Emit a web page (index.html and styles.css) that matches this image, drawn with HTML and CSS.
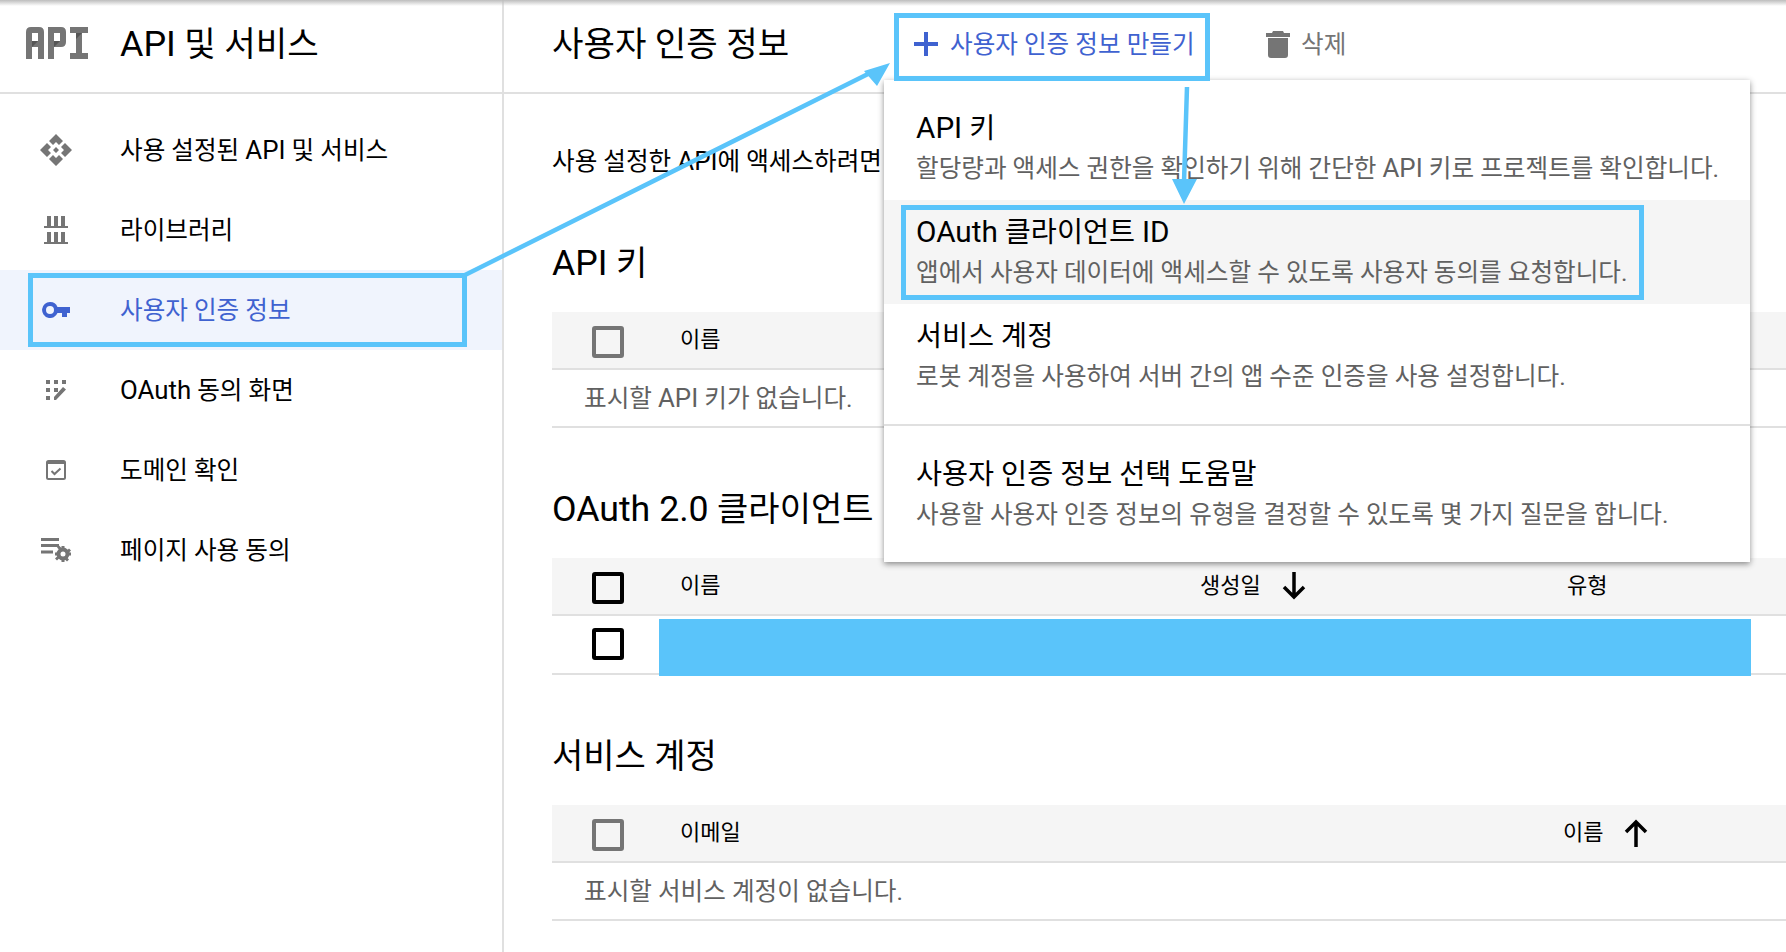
FILE: index.html
```html
<!DOCTYPE html>
<html lang="ko">
<head>
  <meta charset="UTF-8">
  <title>사용자 인증 정보 - API 및 서비스</title>
  <link rel="stylesheet" href="styles.css">
</head>
<body>

  <div class="top-shadow"></div>

  <div class="page">
    <!-- Sidebar -->
    <aside class="sidebar">
      <div class="side-head">
        <svg class="api-logo" viewBox="0 0 62 32" width="62" height="32">
          <path fill="#757575" d="M0 5Q0 0 5 0H13Q18 0 18 5V32H12V20H6V32H0ZM6 6V14H12V6ZM22 0H35Q40 0 40 5V15Q40 20 35 20H28V32H22ZM28 6V14H34V6ZM44 0H62V6H56V26H62V32H44V26H50V6H44Z"/>
          <path fill="#555" d="M6 14h6l-6 6zM28 14h6l-6 6zM50 6h6l-6 6z"/>
        </svg>
        <div class="side-title"><span class="en">API</span> 및 서비스</div>
      </div>
      <ul class="side-nav">
        <li>
          <span class="nav-icon">
            <svg viewBox="0 0 32 32" width="32" height="32"><path fill="#757575" d="M16 0l7 7-4 4-3-3-3 3-4-4zM16 32l7-7-4-4-3 3-3-3-4 4zM0 16l7-7 4 4-3 3 3 3-4 4zM32 16l-7-7-4 4 3 3-3 3 4 4zM16 13l3 3-3 3-3-3z"/></svg>
          </span>
          <span class="nav-label">사용 설정된 <span class="en">API</span> 및 서비스</span>
        </li>
        <li>
          <span class="nav-icon">
            <svg viewBox="0 0 24 28" width="24" height="28"><path fill="#757575" d="M3 0h4v10H3zM10 0h4v10h-4zM17 0h4v10h-4zM0 10h24v2H0zM3 16h4v10H3zM10 16h4v10h-4zM17 16h4v10h-4zM0 26h24v2H0z"/></svg>
          </span>
          <span class="nav-label">라이브러리</span>
        </li>
        <li class="active">
          <span class="nav-icon">
            <svg viewBox="0 0 28 16" width="28" height="16"><path fill="#3f62d0" d="M8 0a8 8 0 0 1 7.500 5H28v6h-3v4h-5v-4h-4.500A8 8 0 1 1 8 0zm0 4a4 4 0 1 0 0 8 4 4 0 0 0 0-8z"/></svg>
          </span>
          <span class="nav-label">사용자 인증 정보</span>
        </li>
        <li>
          <span class="nav-icon">
            <svg viewBox="0 0 20 20" width="20" height="20"><path fill="#757575" d="M0 0h4v4H0zM8 0h4v4H8zM16 0h4v4h-4zM0 8h4v4H0zM8 8h4v4H8zM0 16h4v4H0zM17 7l3 2.500L10 20H8v-3z"/></svg>
          </span>
          <span class="nav-label"><span class="en">OAuth</span> 동의 화면</span>
        </li>
        <li>
          <span class="nav-icon">
            <svg viewBox="0 0 20 20" width="20" height="20"><rect x="1" y="1" width="18" height="18" rx="1.500" fill="none" stroke="#757575" stroke-width="2"/><path fill="#757575" d="M1 1h18v3H1z"/><path fill="none" stroke="#757575" stroke-width="2" d="M5.500 11l3 3 6-5.500"/></svg>
          </span>
          <span class="nav-label">도메인 확인</span>
        </li>
        <li>
          <span class="nav-icon">
            <svg viewBox="0 0 30 24" width="30" height="24"><path fill="#757575" d="M0 0h18v3H0zM0 6h18v3H0zM0 12.500h12v3H0z"/><circle cx="22" cy="16" r="4.500" fill="none" stroke="#757575" stroke-width="4"/><path fill="#757575" d="M20.500 8h3v3h-3zM20.500 21h3v3h-3zM14 14.500h3v3h-3zM27 14.500h3v3h-3zM16 9.500l2-2 2.500 2.500-2 2zM26 19.500l2 2-2 2-2.500-2.500zM16 22.500l-2-2 2.500-2.500 2 2zM26 12.500l2-2 2 2-2.500 2.500z"/></svg>
          </span>
          <span class="nav-label">페이지 사용 동의</span>
        </li>
      </ul>
    </aside>

    <!-- Main -->
    <main class="main">
      <div class="toolbar">
        <h1 class="page-title">사용자 인증 정보</h1>
        <div class="create-btn">
          <svg viewBox="0 0 24 24" width="24" height="24"><path fill="#3f62d0" d="M10 0h4v10h10v4H14v10h-4V14H0v-4h10z"/></svg>
          사용자 인증 정보 만들기
        </div>
        <div class="delete-btn">
          <svg viewBox="0 0 24 27" width="24" height="27"><path fill="#757575" d="M7 0h10l1 2h6v4H0V2h6zM2 7h20v17a3 3 0 0 1-3 3H5a3 3 0 0 1-3-3z"/></svg>
          삭제
        </div>
      </div>

      <div class="content">
        <p class="intro">사용 설정한 <span class="en">API</span>에 액세스하려면</p>

        <h2 class="section-title first"><span class="en">API</span> 키</h2>
        <div class="table">
          <div class="row head-row keys">
            <span class="check"></span>
            <span class="col">이름</span>
          </div>
          <div class="empty-row">표시할 <span class="en">API</span> 키가 없습니다.</div>
        </div>

        <h2 class="section-title"><span class="en">OAuth 2.0</span> 클라이언트</h2>
        <div class="table">
          <div class="row head-row oauth">
            <span class="check dark"></span>
            <span class="col">이름</span>
            <span class="sort"><span class="col">생성일</span>
              <svg viewBox="0 0 24 28" width="24" height="28"><path fill="none" stroke="#000" stroke-width="3.500" d="M12 0v25M2 15l10 10 10-10"/></svg>
            </span>
            <span class="col">유형</span>
          </div>
          <div class="row data-row oauth">
            <span class="check dark"></span>
          </div>
        </div>

        <h2 class="section-title">서비스 계정</h2>
        <div class="table">
          <div class="row head-row accounts">
            <span class="check"></span>
            <span class="col">이메일</span>
            <span class="sort"><span class="col">이름</span>
              <svg viewBox="0 0 24 28" width="24" height="28"><path fill="none" stroke="#000" stroke-width="3.500" d="M12 28V3M2 13L12 3l10 10"/></svg>
            </span>
          </div>
          <div class="empty-row">표시할 서비스 계정이 없습니다.</div>
        </div>
      </div>
    </main>
  </div>

  <!-- Dropdown menu -->
  <div class="menu">
    <div class="menu-item">
      <div class="menu-name"><span class="en">API</span> 키</div>
      <div class="menu-desc">할당량과 액세스 권한을 확인하기 위해 간단한 <span class="en">API</span> 키로 프로젝트를 확인합니다.</div>
    </div>
    <div class="menu-item selected">
      <div class="menu-name"><span class="en">OAuth</span> 클라이언트 <span class="en">ID</span></div>
      <div class="menu-desc">앱에서 사용자 데이터에 액세스할 수 있도록 사용자 동의를 요청합니다.</div>
    </div>
    <div class="menu-item">
      <div class="menu-name">서비스 계정</div>
      <div class="menu-desc">로봇 계정을 사용하여 서버 간의 앱 수준 인증을 사용 설정합니다.</div>
    </div>
    <div class="menu-item help">
      <div class="menu-name">사용자 인증 정보 선택 도움말</div>
      <div class="menu-desc">사용할 사용자 인증 정보의 유형을 결정할 수 있도록 몇 가지 질문을 합니다.</div>
    </div>
  </div>

  <!-- Annotations drawn on top of the screenshot -->
  <div class="mark mark-nav"></div>
  <div class="mark mark-create"></div>
  <div class="mark mark-oauth"></div>
  <div class="redact"></div>
  <svg class="arrows" viewBox="0 0 1786 952" width="1786" height="952">
    <path fill="none" stroke="#5ac4fa" stroke-width="4.500" d="M465 275 872 72M1187 87l-3 95"/>
    <path fill="#5ac4fa" d="M890 63 864 71 877 86zM1184 204 1172 179H1197z"/>
  </svg>

</body>
</html>
```

FILE: styles.css
```css
* {
  box-sizing: border-box;
}

body {
  margin: 0;
  height: 952px;
  overflow: hidden;
  background: #fff;
  color: #000;
  font-family: Roboto, "Noto Sans CJK KR", sans-serif;
}

/* Latin runs sit a little larger next to the Hangul */
.en {
  font-size: 1.05em;
  line-height: 0;
}

.top-shadow {
  position: absolute;
  top: 0;
  left: 0;
  width: 100%;
  height: 6px;
  background: linear-gradient(#bdbdbd, rgba(255, 255, 255, 0));
}

.page {
  display: flex;
  height: 952px;
}

/* Sidebar */
.sidebar {
  width: 504px;
  flex-shrink: 0;
  border-right: 2px solid #e0e0e0;
}

.side-head {
  display: flex;
  align-items: center;
  height: 94px;
  padding: 0 0 10px 26px;
  border-bottom: 2px solid #e0e0e0;
}

.api-logo {
  margin-top: 4px;
  margin-right: 32px;
}

.side-title {
  font-size: 34.200px;
}

.side-nav {
  list-style-type: none;
  margin: 16px 0 0;
  padding: 0;
}

.side-nav li {
  display: flex;
  align-items: center;
  height: 80px;
  font-size: 24.600px;
}

.side-nav li.active {
  background-color: #f0f4fd;
  color: #3f62d0;
}

.nav-label {
  padding-bottom: 4px;
}

.nav-icon {
  display: flex;
  justify-content: center;
  align-items: center;
  width: 120px;
  padding-right: 8px;
  flex-shrink: 0;
}

/* Toolbar */
.main {
  flex: 1;
  min-width: 0;
}

.toolbar {
  display: flex;
  align-items: center;
  height: 94px;
  padding: 0 0 8px 48px;
  border-bottom: 2px solid #e0e0e0;
}

.toolbar svg {
  margin-top: 4px;
}

.page-title {
  width: 362px;
  margin: 0 0 2px;
  font-size: 34.200px;
  font-weight: 400;
}

.create-btn,
.delete-btn {
  display: flex;
  align-items: center;
  font-size: 24.600px;
}

.create-btn {
  gap: 12px;
  width: 352px;
  color: #3f62d0;
}

.delete-btn {
  gap: 11px;
  color: #757575;
}

/* Content */
.content {
  padding: 54px 0 0 48px;
}

.intro {
  margin: 0;
  font-size: 24.600px;
  line-height: 28px;
  white-space: nowrap;
}

.section-title {
  margin: 60px 0 28px;
  font-size: 34px;
  font-weight: 400;
  line-height: 42px;
  white-space: nowrap;
}

.section-title.first {
  margin-top: 66px;
}

/* Tables */
.row {
  display: grid;
  align-items: center;
  font-size: 22px;
}

.head-row {
  height: 58px;
  background-color: #f5f5f5;
  border-bottom: 2px solid #e0e0e0;
}

.head-row .check {
  margin-top: 3px;
}

.data-row .check {
  margin-bottom: 2px;
}

.col {
  margin-bottom: 6px;
}

.keys {
  grid-template-columns: 128px 1fr;
}

.oauth {
  grid-template-columns: 128px 520px 367px 1fr;
}

.accounts {
  grid-template-columns: 128px 883px 1fr;
}

.data-row {
  height: 59px;
  border-bottom: 2px solid #e0e0e0;
}

.check {
  width: 32px;
  height: 32px;
  margin-left: 40px;
  border: 4px solid #757575;
  border-radius: 3px;
}

.check.dark {
  border-color: #000;
}

.sort {
  display: flex;
  align-items: center;
  gap: 21px;
}

.empty-row {
  height: 58px;
  padding-left: 32px;
  border-bottom: 2px solid #e0e0e0;
  color: #616161;
  font-size: 24.600px;
  line-height: 58px;
}

/* Dropdown menu */
.menu {
  position: absolute;
  top: 80px;
  left: 884px;
  width: 866px;
  height: 482px;
  padding-top: 16px;
  background: #fff;
  box-shadow: 0 2px 6px rgba(0, 0, 0, 0.45);
}

.menu-item {
  height: 104px;
  padding: 15px 32px 0;
}

.menu-item.selected {
  background-color: #f5f5f5;
}

.menu-item.help {
  height: 136px;
  margin-top: 16px;
  padding-top: 31px;
  border-top: 2px solid #e0e0e0;
}

.menu-name {
  font-size: 28.300px;
  line-height: 36px;
  white-space: nowrap;
}

.menu-desc {
  margin-top: 4px;
  color: #616161;
  font-size: 24.600px;
  line-height: 36px;
  white-space: nowrap;
}

/* Annotations */
.mark {
  position: absolute;
  border: 5px solid #5ac4fa;
}

.mark-nav {
  top: 273px;
  left: 28px;
  width: 439px;
  height: 74px;
}

.mark-create {
  top: 13px;
  left: 894px;
  width: 316px;
  height: 68px;
}

.mark-oauth {
  top: 205px;
  left: 901px;
  width: 743px;
  height: 95px;
}

.redact {
  position: absolute;
  top: 619px;
  left: 659px;
  width: 1092px;
  height: 57px;
  background-color: #5ac4fa;
}

.arrows {
  position: absolute;
  top: 0;
  left: 0;
}
```
